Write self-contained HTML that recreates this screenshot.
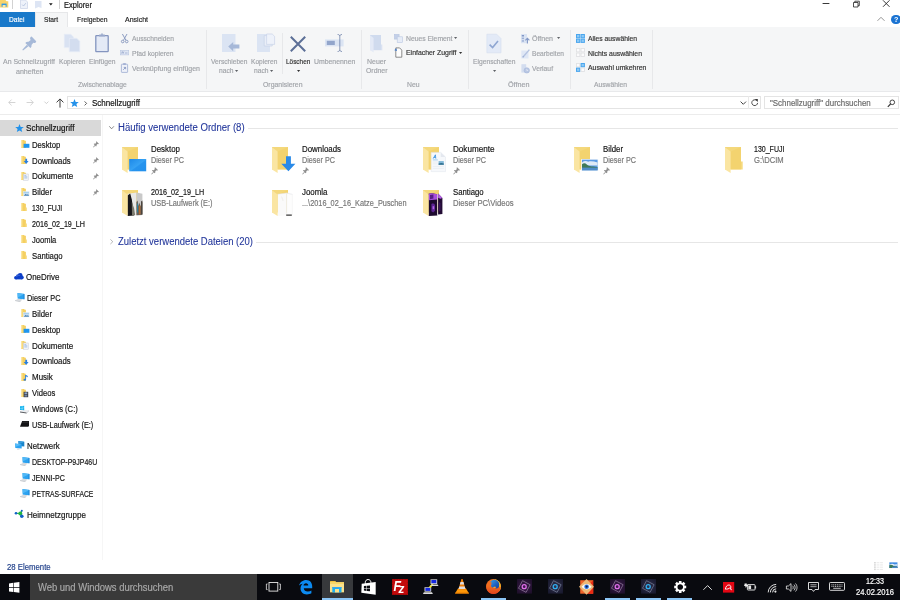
<!DOCTYPE html>
<html><head><meta charset="utf-8">
<style>
*{box-sizing:border-box;margin:0;padding:0}
html,body{width:900px;height:600px;overflow:hidden;background:#fff}
body{font-family:"Liberation Sans",sans-serif;font-size:8px;color:#1b1b1b;position:relative}
.a{position:absolute}
.t{position:absolute;white-space:pre;line-height:10px;height:10px;transform-origin:0 50%;-webkit-text-stroke:.18px currentColor}
.dis{color:#a1a4a9}
.blue{color:#1e3287}
.sub{color:#767676}
svg{position:absolute;overflow:visible}
</style></head><body><div id="w" style="position:absolute;left:0;top:0;width:900px;height:600px;will-change:transform">
<svg style="left:0px;top:0px" width="9" height="9" viewBox="0 0 9 9"><path d="M0 0h5.5l1 1.2H8.3V7.6H0z" fill="#f7d36b"/><rect x="1.6" y="3.6" width="5" height="3.2" fill="#2f9ae8"/><rect x="2.6" y="5" width="3" height="2.6" fill="#fbe7a3"/></svg>
<div class="a" style="left:11.5px;top:0px;width:1px;height:9px;background:#d2d2d2"></div>
<svg style="left:20px;top:0px" width="8" height="9" viewBox="0 0 8 9"><path d="M.5 0H5.5L7.5 2V8.5H.5z" fill="#eef2fa" stroke="#c9d3e6" stroke-width=".7"/><path d="M2.2 4.6l1.3 1.400 2.300-2.800" fill="none" stroke="#b6c4df" stroke-width=".9"/></svg>
<svg style="left:35px;top:1px" width="7" height="8" viewBox="0 0 7 8"><path d="M0 0h6.500v7L3.500 6 0 7.600z" fill="#dde5f4"/></svg>
<svg style="left:49.2px;top:3.4px" width="4" height="3" viewBox="0 0 4 3"><path d="M0 .2h3.700L1.850 2.600z" fill="#1a1a1a"/></svg>
<div class="a" style="left:59.3px;top:0px;width:1px;height:9px;background:#d2d2d2"></div>
<div class="t" style="left:64.00px;top:-0.20px;font-size:8.3px;transform:scaleX(0.9058);color:#111;">Explorer</div>
<svg style="left:822px;top:0px" width="78" height="10" viewBox="0 0 78 10"><path d="M.6 3.500h6.800" stroke="#222" stroke-width=".9" fill="none"/><path d="M31.500 2.500h4.500v4.500h-4.500zM32.800 2.500v-1.300h4.500v4.500h-1.300" stroke="#222" stroke-width=".8" fill="none"/><path d="M61 .3l6.500 6.500M67.500 .3L61 6.800" stroke="#222" stroke-width=".9" fill="none"/></svg>
<div class="a" style="left:0px;top:12px;width:35px;height:15px;background:#1979ca"></div>
<div class="a" style="left:35px;top:12px;width:33px;height:16px;background:#f5f6f7;border:1px solid #e6e7e9;border-bottom:none"></div>
<div class="t" style="left:8.50px;top:15.10px;font-size:7.6px;transform:scaleX(0.8734);color:#fff;">Datei</div>
<div class="t" style="left:44.00px;top:15.10px;font-size:7.6px;transform:scaleX(0.8720);color:#222;">Start</div>
<div class="t" style="left:76.50px;top:15.10px;font-size:7.6px;transform:scaleX(0.8912);color:#222;">Freigeben</div>
<div class="t" style="left:125.00px;top:15.10px;font-size:7.6px;transform:scaleX(0.9227);color:#222;">Ansicht</div>
<svg style="left:877px;top:16px" width="8" height="6" viewBox="0 0 8 6"><path d="M.5 4.800L4 1.300l3.500 3.500" stroke="#7a7a7a" stroke-width=".8" fill="none"/></svg>
<div class="a" style="left:891.4px;top:14.6px;width:9.400px;height:9.400px;border-radius:50%;background:#1a73d2;color:#fff;font-size:7.200px;line-height:9.600px;text-align:center;font-weight:bold">?</div>
<div class="a" style="left:0px;top:27px;width:900px;height:65px;background:#f5f6f7;border-bottom:1px solid #e8e9eb"></div>
<svg style="left:21px;top:36px" width="16" height="15" viewBox="0 0 16 15"><g fill="#a6b9d8"><path d="M10.600 .6L15.200 5.200C15.200 6.200 14.200 7.200 13.200 7.100L12.300 6.700 10.500 9C10.700 10.400 10.300 11.400 9.400 12.100L4.300 6.900C5 6 6.200 5.600 7.500 5.800L9.700 3.900 9.100 2.900C9 1.800 9.700.8 10.600.6Z"/><path d="M5.900 8.700L7.500 10.300 2 14.400 1.300 13.700Z"/></g></svg>
<svg style="left:64px;top:34px" width="17" height="19" viewBox="0 0 17 19"><path d="M.3.300h6.500l2.700 2.700v10.600H.3z" fill="#d9e2f2" stroke="#e6ecf7" stroke-width=".6"/><path d="M5.300 4.300h7.500l3 3v10.500H5.300z" fill="#d3ddef" stroke="#e8eef8" stroke-width=".7"/></svg>
<svg style="left:95px;top:33px" width="14" height="20" viewBox="0 0 14 20"><rect x=".8" y="2.600" width="12.400" height="16" rx=".6" fill="#e4eaf6" stroke="#8495bf" stroke-width="1.300"/><rect x="4" y="1.600" width="6" height="2" rx=".5" fill="#9aa9cc"/><rect x="6.300" y=".4" width="1.400" height="1.600" fill="#9aa9cc"/></svg>
<div class="t" style="left:3.00px;top:56.90px;font-size:7.5px;transform:scaleX(0.9262);color:#a1a4a9;">An Schnellzugriff</div>
<div class="t" style="left:15.55px;top:66.90px;font-size:7.5px;transform:scaleX(0.9419);color:#a1a4a9;">anheften</div>
<div class="t" style="left:58.75px;top:56.90px;font-size:7.5px;transform:scaleX(0.8826);color:#a1a4a9;">Kopieren</div>
<div class="t" style="left:88.75px;top:56.90px;font-size:7.5px;transform:scaleX(0.8949);color:#a1a4a9;">Einfügen</div>
<svg style="left:120.5px;top:33.5px" width="8" height="10" viewBox="0 0 8 10"><path d="M1.400 0L4.900 6.200M6 0L2.500 6.200" stroke="#8d9dc2" stroke-width="1" fill="none"/><circle cx="1.700" cy="7.500" r="1.300" fill="none" stroke="#8d9dc2" stroke-width="1"/><circle cx="5.700" cy="7.500" r="1.300" fill="none" stroke="#8d9dc2" stroke-width="1"/></svg>
<svg style="left:120px;top:50px" width="9" height="6" viewBox="0 0 9 6"><rect x=".3" y=".3" width="8.400" height="4.600" fill="#dfe6f4" stroke="#b9c6e0" stroke-width=".6"/><path d="M1.500 3.500l.8-2 .8 2 .8-2M5 3h2.500" stroke="#8c9cc2" stroke-width=".6" fill="none"/></svg>
<svg style="left:121px;top:63px" width="7" height="10" viewBox="0 0 7 10"><rect x=".4" y="1.200" width="6.200" height="8.200" rx=".5" fill="#eef1f9" stroke="#9dacd0" stroke-width=".8"/><rect x="2.200" y=".2" width="2.600" height="1.600" fill="#9dacd0"/><path d="M2.200 6.800L4.400 4.600M2.800 4.400h1.800v1.800" stroke="#6f82b3" stroke-width=".7" fill="none"/></svg>
<div class="t" style="left:132.00px;top:33.70px;font-size:7.5px;transform:scaleX(0.8913);color:#a1a4a9;">Ausschneiden</div>
<div class="t" style="left:132.00px;top:48.50px;font-size:7.5px;transform:scaleX(0.8967);color:#a1a4a9;">Pfad kopieren</div>
<div class="t" style="left:132.00px;top:63.50px;font-size:7.5px;transform:scaleX(0.9318);color:#a1a4a9;">Verknüpfung einfügen</div>
<div class="t" style="left:78.05px;top:80.00px;font-size:7.5px;transform:scaleX(0.8985);color:#a1a4a9;">Zwischenablage</div>
<div class="a" style="left:206px;top:30px;width:1px;height:59px;background:#e7e8ea"></div>
<svg style="left:222px;top:34px" width="19" height="19" viewBox="0 0 19 19"><path d="M0 0h13.500v18H0z" fill="#dbe4f3"/><path d="M6.200 12.600l5-4.600v2.600h6.200v4h-6.200v2.600z" fill="#a6b8d8"/></svg>
<svg style="left:257px;top:34px" width="19" height="19" viewBox="0 0 19 19"><path d="M0 0h13v18H0z" fill="#dbe4f3"/><path d="M7.200 1.600h5.600l2.400 2.400v8H7.200z" fill="#e9eef8" stroke="#c3cfe6" stroke-width=".6"/><path d="M9.600 0h5.600l2.400 2.400v8H9.600z" fill="#eef2fa" stroke="#c3cfe6" stroke-width=".6"/></svg>
<svg style="left:290px;top:35.5px" width="16" height="16" viewBox="0 0 16 16"><path d="M.8.800l14.400 14.400M15.200.8L.8 15.200" stroke="#5c6f97" stroke-width="2" fill="none"/></svg>
<svg style="left:325px;top:34px" width="20" height="18" viewBox="0 0 20 18"><rect x="0" y="5.400" width="18.600" height="7" fill="#dbe4f3"/><rect x="1.800" y="6.800" width="8" height="4.200" fill="#92a5cb"/><path d="M12.600.5c1.400 0 2.200.6 2.200 1.600v13.800c0 1-.8 1.600-2.200 1.600M17 .5c-1.400 0-2.200.6-2.200 1.600M17 17.500c-1.400 0-2.200-.6-2.200-1.600" stroke="#6c7fa8" stroke-width=".8" fill="none"/></svg>
<div class="t" style="left:210.55px;top:57.00px;font-size:7.5px;transform:scaleX(0.8842);color:#a1a4a9;">Verschieben</div>
<div class="t" style="left:218.70px;top:66.40px;font-size:7.5px;transform:scaleX(0.8915);color:#a1a4a9;">nach</div>
<svg style="left:235.2px;top:70.1px" width="4" height="3" viewBox="0 0 4 3"><path d="M0 0h3.200L1.600 2z" fill="#5f6267"/></svg>
<div class="t" style="left:250.75px;top:57.00px;font-size:7.5px;transform:scaleX(0.8760);color:#a1a4a9;">Kopieren</div>
<div class="t" style="left:253.70px;top:66.40px;font-size:7.5px;transform:scaleX(0.8915);color:#a1a4a9;">nach</div>
<svg style="left:270.3px;top:70.1px" width="4" height="3" viewBox="0 0 4 3"><path d="M0 0h3.200L1.600 2z" fill="#5f6267"/></svg>
<div class="a" style="left:282px;top:33px;width:1px;height:41px;background:#e7e8ea"></div>
<div class="t" style="left:285.75px;top:57.00px;font-size:7.5px;transform:scaleX(0.8569);color:#333;">Löschen</div>
<svg style="left:296.5px;top:70px" width="4" height="3" viewBox="0 0 4 3"><path d="M0 0h3.200L1.600 2z" fill="#333"/></svg>
<div class="t" style="left:313.75px;top:57.00px;font-size:7.5px;transform:scaleX(0.9171);color:#a1a4a9;">Umbenennen</div>
<div class="t" style="left:263.05px;top:80.00px;font-size:7.5px;transform:scaleX(0.9198);color:#a1a4a9;">Organisieren</div>
<div class="a" style="left:361px;top:30px;width:1px;height:59px;background:#e7e8ea"></div>
<svg style="left:370px;top:35px" width="13" height="18" viewBox="0 0 13 18"><path d="M0 0h11V15.200H0z" fill="#d0dbee"/><path d="M11 9.600h1.300v5.600H11z" fill="#d9e2f2"/><path d="M0 .2L3.600 3V17.600L0 15z" fill="#e4eaf6"/></svg>
<svg style="left:394px;top:34px" width="9" height="9" viewBox="0 0 9 9"><rect x=".3" y=".3" width="4.800" height="4.800" fill="#c3d0e8" stroke="#b3c2df" stroke-width=".5"/><rect x="3.200" y="2.800" width="5.200" height="5.800" fill="#e6ecf7" stroke="#b9c7e2" stroke-width=".6"/></svg>
<svg style="left:394px;top:47px" width="9" height="11" viewBox="0 0 9 11"><path d="M1.800.900h3.800l2.200 2.200v7.100H1.800z" fill="#fdfdfd" stroke="#5c5c5c" stroke-width=".7"/><path d="M.3 3.300L2.300 1.300l.7 2.600z" fill="#3f78c8"/></svg>
<div class="t" style="left:367.00px;top:57.00px;font-size:7.5px;transform:scaleX(0.9299);color:#a1a4a9;">Neuer</div>
<div class="t" style="left:365.95px;top:66.40px;font-size:7.5px;transform:scaleX(0.9210);color:#a1a4a9;">Ordner</div>
<div class="t" style="left:405.50px;top:33.70px;font-size:7.5px;transform:scaleX(0.9068);color:#a1a4a9;">Neues Element</div>
<svg style="left:454.2px;top:37.4px" width="4" height="3" viewBox="0 0 4 3"><path d="M0 0h3.200L1.600 2z" fill="#5f6267"/></svg>
<div class="t" style="left:405.50px;top:48.10px;font-size:7.5px;transform:scaleX(0.9200);color:#333;">Einfacher Zugriff</div>
<svg style="left:458.8px;top:51.8px" width="4" height="3" viewBox="0 0 4 3"><path d="M0 0h3.200L1.600 2z" fill="#333"/></svg>
<div class="t" style="left:407.45px;top:80.00px;font-size:7.5px;transform:scaleX(0.9082);color:#a1a4a9;">Neu</div>
<div class="a" style="left:468px;top:30px;width:1px;height:59px;background:#e7e8ea"></div>
<svg style="left:486px;top:34px" width="16" height="20" viewBox="0 0 16 20"><path d="M.9.200h9.800l4.300 4.300v14.300H.9z" fill="#e3eaf7" stroke="#d3ddef" stroke-width=".6"/><path d="M3.600 10.600l3 3 5.400-6.600" fill="none" stroke="#8fa6d2" stroke-width="1.600"/></svg>
<svg style="left:520.5px;top:34px" width="9" height="10" viewBox="0 0 9 10"><rect x="0" y="0" width="6" height="9.200" fill="#dbe4f3"/><rect x=".8" y="1" width="2.200" height="1.500" fill="#8398c6"/><rect x=".8" y="3.600" width="2.200" height="1.500" fill="#9fb1d6"/><rect x=".8" y="6.200" width="2.200" height="1.500" fill="#9fb1d6"/><path d="M6.400 9.400V4.400M4.400 6.400l2-2.200 2 2.200" stroke="#8398c6" stroke-width="1.100" fill="none"/></svg>
<svg style="left:520.5px;top:48.5px" width="9" height="10" viewBox="0 0 9 10"><path d="M.3 1.400h5.200l2 2v6H.3z" fill="#dfe7f5"/><path d="M1.800 8.200L8.400.6" stroke="#b3c2e0" stroke-width="1.400"/><path d="M1.400 8.600l.6-1.600 1 .9z" fill="#8ea3cf"/></svg>
<svg style="left:520.5px;top:63.5px" width="9" height="10" viewBox="0 0 9 10"><path d="M.4.200h4.800v8.400H.4z" fill="#d3ddef"/><circle cx="5.800" cy="6.400" r="2.700" fill="#b9c7e3" stroke="#9fb1d6" stroke-width=".5"/><path d="M5.800 4.900v1.600h1.300" stroke="#eef2fa" stroke-width=".6" fill="none"/></svg>
<div class="t" style="left:473.05px;top:57.00px;font-size:7.5px;transform:scaleX(0.8940);color:#a1a4a9;">Eigenschaften</div>
<svg style="left:492.6px;top:69.6px" width="4" height="3" viewBox="0 0 4 3"><path d="M0 0h3.200L1.600 2z" fill="#5f6267"/></svg>
<div class="t" style="left:532.00px;top:33.70px;font-size:7.5px;transform:scaleX(0.9382);color:#a1a4a9;">Öffnen</div>
<svg style="left:556.6px;top:37.4px" width="4" height="3" viewBox="0 0 4 3"><path d="M0 0h3.200L1.600 2z" fill="#5f6267"/></svg>
<div class="t" style="left:532.00px;top:48.50px;font-size:7.5px;transform:scaleX(0.8820);color:#a1a4a9;">Bearbeiten</div>
<div class="t" style="left:532.00px;top:63.80px;font-size:7.5px;transform:scaleX(0.8994);color:#a1a4a9;">Verlauf</div>
<div class="t" style="left:507.95px;top:80.00px;font-size:7.5px;transform:scaleX(0.9606);color:#a1a4a9;">Öffnen</div>
<div class="a" style="left:570px;top:30px;width:1px;height:59px;background:#e7e8ea"></div>
<svg style="left:576px;top:33.5px" width="9" height="9" viewBox="0 0 9 9"><rect x="0" y="0" width="4.300" height="4.300" fill="#4aa6ee"/><rect x="1" y="1" width="2.300" height="2.300" fill="#8ecaf6"/><rect x="4.6" y="0" width="4.300" height="4.300" fill="#4aa6ee"/><rect x="5.6" y="1" width="2.300" height="2.300" fill="#8ecaf6"/><rect x="0" y="4.6" width="4.300" height="4.300" fill="#4aa6ee"/><rect x="1" y="5.6" width="2.300" height="2.300" fill="#8ecaf6"/><rect x="4.6" y="4.6" width="4.300" height="4.300" fill="#4aa6ee"/><rect x="5.6" y="5.6" width="2.300" height="2.300" fill="#8ecaf6"/></svg>
<svg style="left:576px;top:48px" width="9" height="9" viewBox="0 0 9 9"><rect x="0" y="0" width="4.300" height="4.300" fill="#e1e2e4"/><rect x="0.9" y="0.9" width="2.500" height="2.500" fill="#fbfbfc"/><rect x="4.6" y="0" width="4.300" height="4.300" fill="#e1e2e4"/><rect x="5.5" y="0.9" width="2.500" height="2.500" fill="#fbfbfc"/><rect x="0" y="4.6" width="4.300" height="4.300" fill="#e1e2e4"/><rect x="0.9" y="5.5" width="2.500" height="2.500" fill="#fbfbfc"/><rect x="4.6" y="4.6" width="4.300" height="4.300" fill="#e1e2e4"/><rect x="5.5" y="5.5" width="2.500" height="2.500" fill="#fbfbfc"/></svg>
<svg style="left:576px;top:63px" width="9" height="9" viewBox="0 0 9 9"><rect x="0" y="0" width="4.300" height="4.300" fill="#e1e2e4"/><rect x="0.9" y="0.9" width="2.500" height="2.500" fill="#fbfbfc"/><rect x="4.6" y="0" width="4.300" height="4.300" fill="#4aa6ee"/><rect x="5.6" y="1" width="2.300" height="2.300" fill="#8ecaf6"/><rect x="0" y="4.6" width="4.300" height="4.300" fill="#4aa6ee"/><rect x="1" y="5.6" width="2.300" height="2.300" fill="#8ecaf6"/><rect x="4.6" y="4.6" width="4.300" height="4.300" fill="#e1e2e4"/><rect x="5.5" y="5.5" width="2.500" height="2.500" fill="#fbfbfc"/></svg>
<div class="t" style="left:587.70px;top:34.00px;font-size:7.5px;transform:scaleX(0.9041);color:#333;">Alles auswählen</div>
<div class="t" style="left:587.70px;top:48.50px;font-size:7.5px;transform:scaleX(0.9187);color:#333;">Nichts auswählen</div>
<div class="t" style="left:587.70px;top:63.00px;font-size:7.5px;transform:scaleX(0.9140);color:#333;">Auswahl umkehren</div>
<div class="t" style="left:594.00px;top:79.80px;font-size:7.5px;transform:scaleX(0.8994);color:#a1a4a9;">Auswählen</div>
<div class="a" style="left:652px;top:30px;width:1px;height:59px;background:#e7e8ea"></div>
<div class="a" style="left:0px;top:114px;width:900px;height:1px;background:#ececec"></div>
<svg style="left:7.5px;top:99px" width="8" height="7" viewBox="0 0 8 7"><path d="M7.400 3.500H.8M3.600.6L.7 3.500l2.900 2.900" stroke="#cfcfcf" stroke-width=".9" fill="none"/></svg>
<svg style="left:26px;top:99px" width="8" height="7" viewBox="0 0 8 7"><path d="M.6 3.500h6.600M4.400.6l2.900 2.900-2.900 2.900" stroke="#cfcfcf" stroke-width=".9" fill="none"/></svg>
<svg style="left:44px;top:101px" width="5" height="4" viewBox="0 0 5 4"><path d="M.4.600l2 2 2-2" stroke="#c4c4c4" stroke-width=".8" fill="none"/></svg>
<svg style="left:55.5px;top:98px" width="8" height="10" viewBox="0 0 8 10"><path d="M4 9.600V1M.6 4.400L4 .9l3.400 3.500" stroke="#3c3c3c" stroke-width="1" fill="none"/></svg>
<div class="a" style="left:67px;top:96px;width:694px;height:13px;border:1px solid #e4e4e4"></div>
<svg style="left:70.2px;top:98.5px" width="9" height="8" viewBox="0 0 9 8"><path d="M4.500 0l1.200 2.900 3.100.2-2.400 2 .8 3-2.700-1.700L1.800 8.100l.8-3-2.400-2 3.100-.2z" fill="#2492ea"/></svg>
<svg style="left:84px;top:100.5px" width="4" height="5" viewBox="0 0 4 5"><path d="M.6.400l2 2-2 2" stroke="#333" stroke-width=".8" fill="none"/></svg>
<svg style="left:739.5px;top:101px" width="7" height="5" viewBox="0 0 7 5"><path d="M.6.600l2.700 2.700L6 .6" stroke="#444" stroke-width="1" fill="none"/></svg>
<div class="a" style="left:748px;top:96px;width:1px;height:13px;background:#e9e9e9"></div>
<svg style="left:751.3px;top:99.2px" width="8" height="8" viewBox="0 0 8 8"><path d="M5.600 1.500A2.900 2.900 0 1 0 6.600 3.900" stroke="#3a3a3a" stroke-width=".9" fill="none"/><path d="M3.700 0h3.100v3.100z" fill="#3a3a3a"/></svg>
<div class="a" style="left:764px;top:96px;width:135px;height:13px;border:1px solid #e4e4e4"></div>
<svg style="left:886.5px;top:98.5px" width="9" height="9" viewBox="0 0 9 9"><circle cx="5.300" cy="3.300" r="2.300" stroke="#333" stroke-width=".9" fill="none"/><path d="M3.600 5L.8 7.800" stroke="#333" stroke-width="1.100"/></svg>
<div class="t" style="left:91.70px;top:97.70px;font-size:8.6px;transform:scaleX(0.9325);color:#111;">Schnellzugriff</div>
<div class="t" style="left:769.60px;top:98.20px;font-size:8.6px;transform:scaleX(0.9230);color:#6a6a6a;">&quot;Schnellzugriff&quot; durchsuchen</div>
<div class="a" style="left:0px;top:120px;width:101px;height:16px;background:#d9d9d9"></div>
<div class="a" style="left:102px;top:115px;width:1px;height:445px;background:#f6f6f6"></div>
<svg style="left:15.4px;top:124.3px" width="9" height="8" viewBox="0 0 9 8"><path d="M4.500 0l1.200 2.900 3.100.2-2.400 2 .8 3-2.700-1.700L1.800 8.100l.8-3-2.400-2 3.100-.2z" fill="#2492ea"/></svg>
<div class="t" style="left:26.10px;top:123.40px;font-size:8.5px;transform:scaleX(0.9514);color:#111;">Schnellzugriff</div>
<svg style="left:21.1px;top:139.89999999999998px" width="9" height="9" viewBox="0 0 9 9"><path d="M0 .1h3.100l.6.700h1.200v7.100H0z" fill="#f5d062"/><path d="M0 .1h1.400v8.200L0 7.500z" fill="#fbe6a0"/><rect x="2.600" y="3.800" width="5.800" height="4" fill="#1e96f0"/></svg>
<div class="t" style="left:31.70px;top:139.70px;font-size:8.5px;transform:scaleX(0.9075);color:#151515;">Desktop</div>
<svg style="left:93px;top:141.0px" width="6" height="7" viewBox="0 0 6 7"><g fill="#8e8e8e"><path d="M3.400.2L5.900 2.700 5.200 3.200 4.400 2.900 3.500 4.100 3.600 5.100 3 5.500.7 3.100 1.200 2.600 2.200 2.800 3.300 1.700 2.900.9z"/><path d="M.1 6.100L1.900 4.100 2.400 4.600.5 6.500z"/></g></svg>
<svg style="left:21.1px;top:155.7px" width="9" height="9" viewBox="0 0 9 9"><path d="M0 .1h3.100l.6.700h1.200v7.100H0z" fill="#f5d062"/><path d="M0 .1h1.400v8.200L0 7.500z" fill="#fbe6a0"/><path d="M4.300 2.800h1.800v2.200h1.500L5.200 7.900 2.800 5h1.500z" fill="#2a7fe0"/></svg>
<div class="t" style="left:31.70px;top:155.50px;font-size:8.5px;transform:scaleX(0.9202);color:#151515;">Downloads</div>
<svg style="left:93px;top:156.8px" width="6" height="7" viewBox="0 0 6 7"><g fill="#8e8e8e"><path d="M3.400.2L5.900 2.700 5.200 3.200 4.400 2.900 3.500 4.100 3.600 5.100 3 5.500.7 3.100 1.200 2.600 2.200 2.800 3.300 1.700 2.900.9z"/><path d="M.1 6.100L1.900 4.100 2.400 4.600.5 6.500z"/></g></svg>
<svg style="left:21.1px;top:171.7px" width="9" height="9" viewBox="0 0 9 9"><path d="M0 .1h3.100l.6.700h1.200v7.100H0z" fill="#f5d062"/><path d="M0 .1h1.400v8.200L0 7.500z" fill="#fbe6a0"/><rect x="2.400" y="2" width="4.800" height="6.200" fill="#f4f6fa" stroke="#c2c8d4" stroke-width=".5"/><path d="M3.300 3.600h2M3.300 4.800h3M3.300 6h3" stroke="#7fa6d8" stroke-width=".6"/></svg>
<div class="t" style="left:31.70px;top:171.40px;font-size:8.5px;transform:scaleX(0.9501);color:#151515;">Dokumente</div>
<svg style="left:93px;top:172.8px" width="6" height="7" viewBox="0 0 6 7"><g fill="#8e8e8e"><path d="M3.400.2L5.900 2.700 5.200 3.200 4.400 2.900 3.500 4.100 3.600 5.100 3 5.500.7 3.100 1.200 2.600 2.200 2.800 3.300 1.700 2.900.9z"/><path d="M.1 6.100L1.900 4.100 2.400 4.600.5 6.500z"/></g></svg>
<svg style="left:21.1px;top:187.5px" width="9" height="9" viewBox="0 0 9 9"><path d="M0 .1h3.100l.6.700h1.200v7.100H0z" fill="#f5d062"/><path d="M0 .1h1.400v8.200L0 7.500z" fill="#fbe6a0"/><rect x="2.400" y="3.600" width="5.800" height="4.400" fill="#dceaf6" stroke="#e8eef4" stroke-width=".4"/><path d="M2.600 7.800l2-2 1.400 1 1-.8 1.200 1.800z" fill="#4f86b8"/><rect x="2.600" y="3.800" width="5.400" height="1.600" fill="#a8d0ee"/></svg>
<div class="t" style="left:31.70px;top:187.30px;font-size:8.5px;transform:scaleX(0.9202);color:#151515;">Bilder</div>
<svg style="left:93px;top:188.60000000000002px" width="6" height="7" viewBox="0 0 6 7"><g fill="#8e8e8e"><path d="M3.400.2L5.900 2.700 5.200 3.200 4.400 2.900 3.500 4.100 3.600 5.100 3 5.500.7 3.100 1.200 2.600 2.200 2.800 3.300 1.700 2.900.9z"/><path d="M.1 6.100L1.900 4.100 2.400 4.600.5 6.500z"/></g></svg>
<svg style="left:21.1px;top:203.29999999999998px" width="9" height="9" viewBox="0 0 9 9"><path d="M0 .1h3.100l.6.700h1.200v7.100H0z" fill="#f5d062"/><path d="M0 .1h1.400v8.200L0 7.500z" fill="#fbe6a0"/><path d="M4.900 4.400h.9v3.500h-.9z" fill="#f7d978"/></svg>
<div class="t" style="left:31.70px;top:203.10px;font-size:8.5px;transform:scaleX(0.8167);color:#151515;">130_FUJI</div>
<svg style="left:21.1px;top:219.2px" width="9" height="9" viewBox="0 0 9 9"><path d="M0 .1h3.100l.6.700h1.200v7.100H0z" fill="#f5d062"/><path d="M0 .1h1.400v8.200L0 7.500z" fill="#fbe6a0"/><path d="M4.900 4.400h.9v3.500h-.9z" fill="#f7d978"/></svg>
<div class="t" style="left:31.70px;top:218.90px;font-size:8.5px;transform:scaleX(0.8431);color:#151515;">2016_02_19_LH</div>
<svg style="left:21.1px;top:235.0px" width="9" height="9" viewBox="0 0 9 9"><path d="M0 .1h3.100l.6.700h1.200v7.100H0z" fill="#f5d062"/><path d="M0 .1h1.400v8.200L0 7.500z" fill="#fbe6a0"/><path d="M4.900 4.400h.9v3.500h-.9z" fill="#f7d978"/></svg>
<div class="t" style="left:31.70px;top:234.70px;font-size:8.5px;transform:scaleX(0.8867);color:#151515;">Joomla</div>
<svg style="left:21.1px;top:250.89999999999998px" width="9" height="9" viewBox="0 0 9 9"><path d="M0 .1h3.100l.6.700h1.200v7.100H0z" fill="#f5d062"/><path d="M0 .1h1.400v8.200L0 7.500z" fill="#fbe6a0"/><path d="M4.900 4.400h.9v3.500h-.9z" fill="#f7d978"/></svg>
<div class="t" style="left:31.70px;top:250.60px;font-size:8.5px;transform:scaleX(0.9088);color:#151515;">Santiago</div>
<svg style="left:14.3px;top:272.7px" width="10" height="7" viewBox="0 0 10 7"><g fill="#0c3ec8"><circle cx="1.800" cy="4.700" r="1.700"/><circle cx="4" cy="3.200" r="2"/><circle cx="6.200" cy="2.500" r="2.400"/><circle cx="8" cy="4.600" r="1.800"/><rect x="1.800" y="3.600" width="6.200" height="2.800"/></g><path d="M2.400 4c.6-1.400 2-2 3.400-1.400" stroke="#6a8ee8" stroke-width=".5" fill="none"/></svg>
<div class="t" style="left:26.10px;top:271.90px;font-size:8.5px;transform:scaleX(0.9302);color:#151515;">OneDrive</div>
<svg style="left:14.7px;top:293.09999999999997px" width="10" height="9" viewBox="0 0 10 9"><path d="M2.500 0L9.400.9V6.200L2.700 5.800z" fill="#2ba2f0"/><path d="M2.500 0L9.400.9 2.700 4.600z" fill="#52b8f6"/><path d="M8.600.8l.8.100V6.200l-.8-.050z" fill="#1a7fd0"/><path d="M0 7.400L3.200 5.800 7.800 6.200 5.500 8.200z" fill="#d6dade"/><path d="M0 7.400L5.500 8.200v.6L0 7.900z" fill="#a4aab2"/></svg>
<div class="t" style="left:26.50px;top:293.20px;font-size:8.5px;transform:scaleX(0.8649);color:#151515;">Dieser PC</div>
<svg style="left:21.1px;top:309.09999999999997px" width="9" height="9" viewBox="0 0 9 9"><path d="M0 .1h3.100l.6.700h1.200v7.100H0z" fill="#f5d062"/><path d="M0 .1h1.400v8.200L0 7.500z" fill="#fbe6a0"/><rect x="2.400" y="3.600" width="5.800" height="4.400" fill="#dceaf6" stroke="#e8eef4" stroke-width=".4"/><path d="M2.600 7.800l2-2 1.400 1 1-.8 1.200 1.800z" fill="#4f86b8"/><rect x="2.600" y="3.800" width="5.400" height="1.600" fill="#a8d0ee"/></svg>
<div class="t" style="left:31.70px;top:308.90px;font-size:8.5px;transform:scaleX(0.9202);color:#151515;">Bilder</div>
<svg style="left:21.1px;top:325.0px" width="9" height="9" viewBox="0 0 9 9"><path d="M0 .1h3.100l.6.700h1.200v7.100H0z" fill="#f5d062"/><path d="M0 .1h1.400v8.200L0 7.500z" fill="#fbe6a0"/><rect x="2.600" y="3.800" width="5.800" height="4" fill="#1e96f0"/></svg>
<div class="t" style="left:31.70px;top:324.80px;font-size:8.5px;transform:scaleX(0.9075);color:#151515;">Desktop</div>
<svg style="left:21.1px;top:340.9px" width="9" height="9" viewBox="0 0 9 9"><path d="M0 .1h3.100l.6.700h1.200v7.100H0z" fill="#f5d062"/><path d="M0 .1h1.400v8.200L0 7.500z" fill="#fbe6a0"/><rect x="2.400" y="2" width="4.800" height="6.200" fill="#f4f6fa" stroke="#c2c8d4" stroke-width=".5"/><path d="M3.300 3.600h2M3.300 4.800h3M3.300 6h3" stroke="#7fa6d8" stroke-width=".6"/></svg>
<div class="t" style="left:31.70px;top:340.60px;font-size:8.5px;transform:scaleX(0.9501);color:#151515;">Dokumente</div>
<svg style="left:21.1px;top:356.7px" width="9" height="9" viewBox="0 0 9 9"><path d="M0 .1h3.100l.6.700h1.200v7.100H0z" fill="#f5d062"/><path d="M0 .1h1.400v8.200L0 7.500z" fill="#fbe6a0"/><path d="M4.300 2.800h1.800v2.200h1.500L5.200 7.900 2.800 5h1.500z" fill="#2a7fe0"/></svg>
<div class="t" style="left:31.70px;top:356.40px;font-size:8.5px;transform:scaleX(0.9202);color:#151515;">Downloads</div>
<svg style="left:21.1px;top:372.59999999999997px" width="9" height="9" viewBox="0 0 9 9"><path d="M0 .1h3.100l.6.700h1.200v7.100H0z" fill="#f5d062"/><path d="M0 .1h1.400v8.200L0 7.500z" fill="#fbe6a0"/><path d="M4.600 2v4.600" stroke="#2a7fe0" stroke-width=".9"/><ellipse cx="3.800" cy="6.800" rx="1.300" ry="1" fill="#2a7fe0"/><path d="M4.600 2c1.600.2 2.400 1 2.400 2.400-.6-.8-1.400-1-2.400-1z" fill="#2a7fe0"/></svg>
<div class="t" style="left:31.70px;top:372.30px;font-size:8.5px;transform:scaleX(0.9370);color:#151515;">Musik</div>
<svg style="left:21.1px;top:388.5px" width="9" height="9" viewBox="0 0 9 9"><path d="M0 .1h3.100l.6.700h1.200v7.100H0z" fill="#f5d062"/><path d="M0 .1h1.400v8.200L0 7.500z" fill="#fbe6a0"/><rect x="2.600" y="2.800" width="4.600" height="5.400" fill="#3a3a40"/><rect x="3.500" y="3.400" width="2.800" height="1.800" fill="#8aa4c8"/><rect x="3.500" y="5.800" width="2.800" height="1.800" fill="#6f86a8"/></svg>
<div class="t" style="left:31.70px;top:388.20px;font-size:8.5px;transform:scaleX(0.9017);color:#151515;">Videos</div>
<svg style="left:19.9px;top:406.1px" width="9" height="8" viewBox="0 0 9 8"><path d="M0 5.600L2.400 3.400 9 4.200 6.600 6.600z" fill="#eceef1"/><path d="M0 5.600L6.600 6.600v1L0 6.600z" fill="#5a5d62"/><path d="M6.600 6.600L9 4.200v.9L6.600 7.600z" fill="#c4c8ce"/><path d="M0 .3L1.900 0v1.900L0 2zM2.200 0L4.200-.3v2.100l-2 .1zM0 2.300l1.900-.1v1.900L0 3.900zM2.200 2.200l2-.1v2.200l-2-.2z" fill="#12b4f0"/></svg>
<div class="t" style="left:31.70px;top:404.30px;font-size:8.5px;transform:scaleX(0.8979);color:#151515;">Windows (C:)</div>
<svg style="left:19.9px;top:421px" width="9" height="7" viewBox="0 0 9 7"><path d="M2.100 0h6.900v5L8.200 5.700H0z" fill="#141416"/><path d="M2.600.7h5.800v.7H2.300z" fill="#3a3a3e"/></svg>
<div class="t" style="left:31.70px;top:420.20px;font-size:8.5px;transform:scaleX(0.8651);color:#151515;">USB-Laufwerk (E:)</div>
<svg style="left:14.8px;top:441px" width="10" height="9" viewBox="0 0 10 9"><path d="M3.400 0L9.300.8V5.600L3.600 5z" fill="#1a84c8"/><path d="M3.400 0L9.300.8 3.600 3.600z" fill="#3a9ede"/><path d="M0 2.600L6.700 3.500V7.600L.3 7z" fill="#2aa2f2"/><path d="M0 2.600L6.700 3.500.3 6z" fill="#56bbf8"/><path d="M2.600 7.600l2.400.2-.8.800-2.400-.2z" fill="#c8ccd2"/></svg>
<div class="t" style="left:26.50px;top:441.00px;font-size:8.5px;transform:scaleX(0.9230);color:#151515;">Netzwerk</div>
<svg style="left:19.7px;top:457.2px" width="10" height="9" viewBox="0 0 10 9"><path d="M2.500 0L9.400.9V6.200L2.700 5.800z" fill="#2ba2f0"/><path d="M2.500 0L9.400.9 2.700 4.600z" fill="#52b8f6"/><path d="M8.600.8l.8.100V6.200l-.8-.050z" fill="#1a7fd0"/><path d="M0 7.400L3.200 5.800 7.800 6.200 5.500 8.200z" fill="#d6dade"/><path d="M0 7.400L5.500 8.200v.6L0 7.900z" fill="#a4aab2"/></svg>
<div class="t" style="left:31.70px;top:457.00px;font-size:8.5px;transform:scaleX(0.8244);color:#151515;">DESKTOP-P9JP46U</div>
<svg style="left:19.7px;top:473.4px" width="10" height="9" viewBox="0 0 10 9"><path d="M2.500 0L9.400.9V6.200L2.700 5.800z" fill="#2ba2f0"/><path d="M2.500 0L9.400.9 2.700 4.600z" fill="#52b8f6"/><path d="M8.600.8l.8.100V6.200l-.8-.050z" fill="#1a7fd0"/><path d="M0 7.400L3.200 5.800 7.800 6.200 5.500 8.200z" fill="#d6dade"/><path d="M0 7.400L5.500 8.200v.6L0 7.900z" fill="#a4aab2"/></svg>
<div class="t" style="left:31.70px;top:473.20px;font-size:8.5px;transform:scaleX(0.8367);color:#151515;">JENNI-PC</div>
<svg style="left:19.7px;top:489.09999999999997px" width="10" height="9" viewBox="0 0 10 9"><path d="M2.500 0L9.400.9V6.200L2.700 5.800z" fill="#2ba2f0"/><path d="M2.500 0L9.400.9 2.700 4.600z" fill="#52b8f6"/><path d="M8.600.8l.8.100V6.200l-.8-.050z" fill="#1a7fd0"/><path d="M0 7.400L3.200 5.800 7.800 6.200 5.500 8.200z" fill="#d6dade"/><path d="M0 7.400L5.500 8.200v.6L0 7.900z" fill="#a4aab2"/></svg>
<div class="t" style="left:31.70px;top:488.90px;font-size:8.5px;transform:scaleX(0.7962);color:#151515;">PETRAS-SURFACE</div>
<svg style="left:15px;top:510px" width="9" height="9" viewBox="0 0 9 9"><path d="M1 3.300l4.300.2M5.300 3.500L6.800.8M5.300 3.500l1.500 2.800" stroke="#30b848" stroke-width="1.200"/><circle cx="5.300" cy="3.500" r="2" fill="#22b840"/><circle cx="1" cy="3.300" r="1.300" fill="#1262c8"/><circle cx="6.800" cy=".8" r="1" fill="#1262c8"/><circle cx="6.800" cy="6.300" r="1.800" fill="#1262c8"/></svg>
<div class="t" style="left:26.50px;top:509.70px;font-size:8.5px;transform:scaleX(0.9460);color:#151515;">Heimnetzgruppe</div>
<svg style="left:108.8px;top:125.7px" width="6" height="4" viewBox="0 0 6 4"><path d="M.3.300l2.300 2.500L4.900.3" stroke="#6a6a6a" stroke-width=".8" fill="none"/></svg>
<div class="t" style="left:117.90px;top:123.20px;font-size:10px;transform:scaleX(0.9570);color:#21359a;-webkit-text-stroke:.08px currentColor;">Häufig verwendete Ordner (8)</div>
<div class="a" style="left:247.5px;top:128px;width:650.5px;height:1px;background:#e6e6e6"></div>
<svg style="left:110.4px;top:239.3px" width="4" height="6" viewBox="0 0 4 6"><path d="M.4.400l2.400 2.300L.4 5" stroke="#9a9a9a" stroke-width=".7" fill="none"/></svg>
<div class="t" style="left:117.90px;top:237.40px;font-size:10px;transform:scaleX(0.9487);color:#21359a;-webkit-text-stroke:.08px currentColor;">Zuletzt verwendete Dateien (20)</div>
<div class="a" style="left:256px;top:242px;width:642px;height:1px;background:#e6e6e6"></div>
<svg style="left:121.7px;top:147.1px" width="27" height="27" viewBox="0 0 27 27"><path d="M0 0h16V22.500H0z" fill="#f4d87c"/><path d="M5.600 4.400L16 0v22.500H5.600z" fill="#f2d168" opacity=".6"/><defs><linearGradient id="gd" x1="0" y1="0" x2="1" y2="1"><stop offset="0" stop-color="#1c88e8"/><stop offset=".5" stop-color="#36a2f4"/><stop offset=".56" stop-color="#2794ee"/><stop offset="1" stop-color="#2290ec"/></linearGradient></defs><rect x="7.200" y="12" width="17" height="12.300" fill="url(#gd)"/><path d="M0 .2L5.600 4.400V26.100L0 22.400z" fill="#fae5a2"/></svg>
<div class="t" style="left:151.20px;top:144.00px;font-size:8.5px;transform:scaleX(0.9300);color:#151515;">Desktop</div>
<div class="t" style="left:151.20px;top:154.80px;font-size:8.5px;transform:scaleX(0.8519);color:#777;">Dieser PC</div>
<svg style="left:150.89999999999998px;top:167.1px" width="7.2" height="7.6" viewBox="0 0 6 6.6"><g fill="#8e8e8e"><path d="M3.400.2L5.900 2.700 5.200 3.200 4.400 2.900 3.500 4.100 3.600 5.100 3 5.500.7 3.100 1.200 2.600 2.200 2.800 3.300 1.700 2.900.9z"/><path d="M.1 6.100L1.900 4.100 2.400 4.600.5 6.500z"/></g></svg>
<svg style="left:272.2px;top:147.1px" width="27" height="27" viewBox="0 0 27 27"><path d="M0 0h16V22.500H0z" fill="#f4d87c"/><path d="M5.600 4.400L16 0v22.500H5.600z" fill="#f2d168" opacity=".6"/><path d="M14 9.300h4.900v7.500h4.500L16.400 24.300 9.300 16.800H14z" fill="#2a8ae8"/><path d="M0 .2L5.600 4.400V26.100L0 22.400z" fill="#fae5a2"/></svg>
<div class="t" style="left:301.80px;top:144.00px;font-size:8.5px;transform:scaleX(0.9274);color:#151515;">Downloads</div>
<div class="t" style="left:301.80px;top:154.80px;font-size:8.5px;transform:scaleX(0.8519);color:#777;">Dieser PC</div>
<svg style="left:301.5px;top:167.1px" width="7.2" height="7.6" viewBox="0 0 6 6.6"><g fill="#8e8e8e"><path d="M3.400.2L5.900 2.700 5.200 3.200 4.400 2.900 3.500 4.100 3.600 5.100 3 5.500.7 3.100 1.200 2.600 2.200 2.800 3.300 1.700 2.900.9z"/><path d="M.1 6.100L1.900 4.100 2.400 4.600.5 6.500z"/></g></svg>
<svg style="left:423.3px;top:147.1px" width="27" height="27" viewBox="0 0 27 27"><path d="M0 0h16V22.500H0z" fill="#f4d87c"/><path d="M5.600 4.400L16 0v22.500H5.600z" fill="#f2d168" opacity=".6"/><path d="M8.200 5.400h9.600l4.700 4.600V24.600H8.200z" fill="#f6f8fb" stroke="#e1e5ec" stroke-width=".5"/><path d="M17.800 5.400v4.600h4.700z" fill="#e4e8ef"/><path d="M10.200 11.600l2.200-3.800.4 3.800M10.800 10.400h1.800" stroke="#2f8be0" stroke-width=".8" fill="none"/><path d="M9.800 12.900h5" stroke="#6db4ea" stroke-width=".6"/><rect x="15.600" y="14.100" width="5.200" height="3.700" fill="#7fb6d6"/><path d="M15.600 16.600c1.800-.8 3.400-.8 5.200 0v1.200h-5.200z" fill="#2f6f8e"/><path d="M9.800 15h4.800M9.800 16.800h4.800M9.800 19.400h11M9.800 21.400h11" stroke="#e3e7ee" stroke-width=".6"/><path d="M0 .2L5.600 4.400V26.100L0 22.400z" fill="#fae5a2"/></svg>
<div class="t" style="left:452.80px;top:144.00px;font-size:8.5px;transform:scaleX(0.9547);color:#151515;">Dokumente</div>
<div class="t" style="left:452.80px;top:154.80px;font-size:8.5px;transform:scaleX(0.8519);color:#777;">Dieser PC</div>
<svg style="left:452.5px;top:167.1px" width="7.2" height="7.6" viewBox="0 0 6 6.6"><g fill="#8e8e8e"><path d="M3.400.2L5.900 2.700 5.200 3.200 4.400 2.900 3.500 4.100 3.600 5.100 3 5.500.7 3.100 1.200 2.600 2.200 2.800 3.300 1.700 2.900.9z"/><path d="M.1 6.100L1.900 4.100 2.400 4.600.5 6.500z"/></g></svg>
<svg style="left:574.1px;top:147.1px" width="27" height="27" viewBox="0 0 27 27"><path d="M0 0h16V22.500H0z" fill="#f4d87c"/><path d="M5.600 4.400L16 0v22.500H5.600z" fill="#f2d168" opacity=".6"/><rect x="7.200" y="12" width="17.100" height="12" fill="#f4f7fa"/><rect x="8" y="12.700" width="15.600" height="10.600" fill="#5a9ae4"/><path d="M8 15.400c2-1.600 4.400-1.800 6.200-.6 2.200-.8 5.600-.4 9.400.6v3H8z" fill="#dfeaf6"/><path d="M8 17.200c1.600-1.400 3.400-1.200 4.800.2 1.600 1.400 4 1.800 6.400 2.200l4.400.6v1H8z" fill="#3f7a58"/><path d="M8 20.600h15.600v2.700H8z" fill="#4f8cc8"/><path d="M0 .2L5.600 4.400V26.100L0 22.400z" fill="#fae5a2"/></svg>
<div class="t" style="left:603.40px;top:144.00px;font-size:8.5px;transform:scaleX(0.9202);color:#151515;">Bilder</div>
<div class="t" style="left:603.40px;top:154.80px;font-size:8.5px;transform:scaleX(0.8519);color:#777;">Dieser PC</div>
<svg style="left:603.1px;top:167.1px" width="7.2" height="7.6" viewBox="0 0 6 6.6"><g fill="#8e8e8e"><path d="M3.400.2L5.900 2.700 5.200 3.200 4.400 2.900 3.500 4.100 3.600 5.100 3 5.500.7 3.100 1.200 2.600 2.200 2.800 3.300 1.700 2.900.9z"/><path d="M.1 6.100L1.900 4.100 2.400 4.600.5 6.500z"/></g></svg>
<svg style="left:724.8px;top:147.1px" width="27" height="27" viewBox="0 0 27 27"><path d="M0 0h16V22.500H0z" fill="#f4d87c"/><path d="M5.600 4.400L16 0v22.500H5.600z" fill="#f2d168" opacity=".6"/><path d="M16 14.400h1.700v8.100H16z" fill="#f6da7e"/><path d="M0 .2L5.600 4.400V26.100L0 22.400z" fill="#fae5a2"/></svg>
<div class="t" style="left:754.30px;top:144.00px;font-size:8.5px;transform:scaleX(0.8248);color:#151515;">130_FUJI</div>
<div class="t" style="left:754.30px;top:154.80px;font-size:8.5px;transform:scaleX(0.8954);color:#777;">G:\DCIM</div>
<svg style="left:121.7px;top:189.7px" width="27" height="27" viewBox="0 0 27 27"><path d="M0 0h16V22.500H0z" fill="#f4d87c"/><path d="M5.600 4.400L16 0v22.500H5.600z" fill="#f2d168" opacity=".6"/><path d="M5.600 3.800L14.400 2.600V25L5.600 26.100z" fill="#e9e9e7"/><path d="M5.600 5.400l2.600-1.800 1.600 6 1.400 9.600.8 6.300-6.400.6z" fill="#18171a"/><path d="M9.800 12l2.200 6 1.200 7.200-3.200.4z" fill="#7c7a6e"/><path d="M14.400 2.600l6 1.200V25l-6 .2z" fill="#c9c9c9"/><path d="M14.400 12l1.200-1.600 1 5.600.8-3.600 1.200 4 1.800-5V25l-6 .2z" fill="#6a625a"/><path d="M15 13.600l1 .2v8.600l-1 .2z" fill="#2f7f9a"/><path d="M17 16l1.400-.4v8.600l-1.400.2z" fill="#b86a28"/><path d="M19 11.600l1.400-1V24l-1.400.2z" fill="#4a443e"/><path d="M0 .2L5.600 4.400V26.100L0 22.400z" fill="#fae5a2"/></svg>
<div class="t" style="left:151.20px;top:187.10px;font-size:8.5px;transform:scaleX(0.8462);color:#151515;">2016_02_19_LH</div>
<div class="t" style="left:151.20px;top:197.90px;font-size:8.5px;transform:scaleX(0.8680);color:#777;">USB-Laufwerk (E:)</div>
<svg style="left:272.2px;top:189.7px" width="27" height="27" viewBox="0 0 27 27"><path d="M0 0h16V22.500H0z" fill="#f4d87c"/><path d="M5.600 4.400L16 0v22.500H5.600z" fill="#f2d168" opacity=".6"/><path d="M5.600 4.200l9-1.200V25.200L5.600 26.100z" fill="#fafafa"/><path d="M14.600 3l5.800 1.400V25l-5.800.2z" fill="#fdfdfd" stroke="#ececec" stroke-width=".3"/><path d="M5.600 4.200l9-1.200 5.800 1.400" stroke="#e2e4ea" stroke-width=".5" fill="none"/><path d="M14.600 3v22.200" stroke="#e9e9e9" stroke-width=".4"/><path d="M9.600 6.600l1.200 3.200.2 1.200" stroke="#ecebe6" stroke-width=".8" fill="none"/><path d="M14.200 24.400h5.600v1.300h-5.600z" fill="#3a3a3a"/><path d="M0 .2L5.600 4.400V26.100L0 22.400z" fill="#fae5a2"/></svg>
<div class="t" style="left:301.80px;top:187.10px;font-size:8.5px;transform:scaleX(0.9305);color:#151515;">Joomla</div>
<div class="t" style="left:301.80px;top:197.90px;font-size:8.5px;transform:scaleX(0.8637);color:#777;">...\2016_02_16_Katze_Puschen</div>
<svg style="left:423.3px;top:189.7px" width="27" height="27" viewBox="0 0 27 27"><path d="M0 0h16V22.500H0z" fill="#f4d87c"/><path d="M5.600 4.400L16 0v22.500H5.600z" fill="#f2d168" opacity=".6"/><path d="M5.600 3.800l3.400-.6 5.400 1V25.600l-8.800.5z" fill="#1d0a2e"/><path d="M5.600 3.800l3.400-.6 5.400 1v5.400l-8.800.6z" fill="#a94fdc"/><path d="M7 5l3.400-.4v4L7 9.200z" fill="#5a1f86"/><path d="M8.400 14c1.400-.8 2.800-.6 3.600.8v6l-1.800 1.800-1.800-1.400z" fill="#5e2494"/><path d="M9.600 16.200h1.600v3H9.600z" fill="#b164e4"/><path d="M14.400 4.200l.7-.2V24.800l-.7.800z" fill="#f3f0f6"/><path d="M15.100 3.600l4.300 4.400V24l-4.300.6z" fill="#220c34"/><path d="M15.100 3.600l4.300 4.400-2 .8-2.300-1z" fill="#b860e8"/><path d="M15.700 12l1.800 1v8l-1.800.6z" fill="#3a145a"/><path d="M0 .2L5.600 4.400V26.100L0 22.400z" fill="#fae5a2"/></svg>
<div class="t" style="left:452.80px;top:187.10px;font-size:8.5px;transform:scaleX(0.9118);color:#151515;">Santiago</div>
<div class="t" style="left:452.80px;top:197.90px;font-size:8.5px;transform:scaleX(0.9054);color:#777;">Dieser PC\Videos</div>
<div class="t" style="left:7.30px;top:561.60px;font-size:8.3px;transform:scaleX(0.9377);color:#24438c;">28 Elemente</div>
<svg style="left:874px;top:562px" width="9" height="8" viewBox="0 0 9 8"><g fill="#dadada"><rect x="0" y="0" width="1.800" height="1.500"/><rect x="0" y="2.200" width="1.800" height="1.500"/><rect x="0" y="4.400" width="1.800" height="1.500"/><rect x="0" y="6.600" width="1.800" height="1.500"/></g><g fill="#e6e6e6"><rect x="2.600" y=".3" width="2.800" height=".9"/><rect x="6.100" y=".3" width="2.800" height=".9"/><rect x="2.600" y="2.500" width="2.800" height=".9"/><rect x="6.100" y="2.500" width="2.800" height=".9"/><rect x="2.600" y="4.700" width="2.800" height=".9"/><rect x="6.100" y="4.700" width="2.800" height=".9"/><rect x="2.600" y="6.900" width="2.800" height=".9"/><rect x="6.100" y="6.900" width="2.800" height=".9"/></g></svg>
<svg style="left:888.6px;top:562.4px" width="9" height="7" viewBox="0 0 9 7"><rect x="0" y="0" width="8.800" height="6.400" fill="#eef2f6"/><rect x=".4" y=".4" width="8" height="5.600" fill="#3f8ce6"/><path d="M.4 2.600c2-1 3.600-1 5 0l3-.4v1.600H.4z" fill="#e8f0f8"/><path d="M.4 3c1.600-.6 3-.2 4 1l2 .6 2 .2V6H.4z" fill="#3c7a58"/><path d="M3 5c2-.4 3.600-.4 5.400 0v1H3z" fill="#4a86c4"/></svg>
<div class="a" style="left:0px;top:573.5px;width:900px;height:26.5px;background:#090a0f"></div>
<div class="a" style="left:30px;top:573.5px;width:227px;height:26.5px;background:#3a3a3a"></div>
<div class="t" style="left:37.50px;top:582.60px;font-size:10px;transform:scaleX(0.9439);color:#a8a8a8;">Web und Windows durchsuchen</div>
<svg style="left:9px;top:581.8px" width="11" height="11" viewBox="0 0 11 11"><path d="M0 1.400L4.300.8v4.300H0zM4.900.7L10.400 0v5.100H4.900zM0 5.700h4.300V10L0 9.400zM4.900 5.700h5.500v5.100L4.900 10.100z" fill="#fff"/></svg>
<svg style="left:265.7px;top:582px" width="15" height="10" viewBox="0 0 15 10"><rect x="3" y=".5" width="8.800" height="8.600" fill="none" stroke="#e8e8e8" stroke-width=".9"/><path d="M1.600 2H.4v5.600h1.200M13.200 2h1.200v5.600h-1.200" stroke="#e8e8e8" stroke-width=".8" fill="none"/></svg>
<svg style="left:299px;top:579.5px" width="14" height="15" viewBox="0 0 14 15"><path fill-rule="evenodd" d="M0 5.600C1 2.200 3.800 0 7.200 0C11 0 13.200 2.800 13.200 6.400V8.200H4.800C5 10.400 6.600 11.500 8.800 11.500C10.200 11.500 11.400 11.100 12.400 10.400V13.300C11.200 14 9.600 14.500 7.800 14.500C4 14.500 1.500 12 1.500 8.600C1.500 6.400 2.400 4.800 3.800 3.800C2.200 4 1 4.600 0 5.600ZM4.500 5.600H9.300C9.300 4.200 8.400 3.300 7 3.300C5.600 3.300 4.700 4.200 4.500 5.600Z" fill="#0c8af0"/></svg>
<div class="a" style="left:322.2px;top:573.5px;width:30.6px;height:26.5px;background:#37393c"></div>
<div class="a" style="left:322.2px;top:598.3px;width:30.6px;height:1.7px;background:#8cc6f6"></div>
<svg style="left:330px;top:581px" width="15" height="12" viewBox="0 0 15 12"><path d="M0 .5C0 .2.200 0 .5 0H5.400l.9 1.300H14V11.200H0z" fill="#f3c13c"/><path d="M0 1.400h14v9.800H0z" fill="#fbe28c"/><path d="M0 1.400h14v1.600H0z" fill="#f8d666"/><path d="M2.300 6h9.200v5.400H2.300z" fill="#1cb0f2"/><path d="M2.300 6h9.200v1.200H2.300z" fill="#3aa4ee"/><path d="M5 8h4v3.400H5z" fill="#fbe28c"/></svg>
<svg style="left:361px;top:578.6px" width="15" height="16" viewBox="0 0 15 16"><path d="M4.300 5V3.400C4.300 1.700 5.500.5 7.100.5s2.800 1.200 2.800 2.900v1.100" stroke="#fff" stroke-width="1" fill="none"/><path d="M.7 4.700L14.700 3.100V15.700L.3 13.700z" fill="#fff"/><path d="M2.900 7.100l2.600-.3v2.300H2.900zM6 6.700l3-.3v2.700H6zM2.900 9.600h2.600v2.300l-2.600-.3zM6 9.600h3v2.700L6 12z" fill="#0a0b10"/></svg>
<svg style="left:392px;top:578.8px" width="16" height="16" viewBox="0 0 16 16"><rect x="0" y="0" width="16" height="15.900" fill="#c20a0c"/><rect x=".5" y=".5" width="15" height="14.900" fill="none" stroke="#8e0606" stroke-width=".8" stroke-dasharray=".8 .8"/><text x="1.600" y="12.200" font-family="Liberation Sans" font-weight="bold" font-style="italic" font-size="14" fill="#fff" transform="translate(0 0) scale(.88 1)">F</text><text x="7.200" y="13.900" font-family="Liberation Sans" font-weight="bold" font-style="italic" font-size="13" fill="#fff" transform="scale(.9 1)">z</text></svg>
<svg style="left:422.8px;top:579px" width="17" height="16" viewBox="0 0 17 16"><path d="M4.800 10.800L10.400 4" stroke="#e6de10" stroke-width="1.500"/><rect x="7.500" y=".3" width="6.700" height="4.700" fill="#cfd0d2"/><rect x="8.400" y="1" width="4.900" height="3.200" fill="#1428e0"/><path d="M8 5.500h6.600l.9 1.500H7.200z" fill="#dcdcdc"/><rect x="1.500" y="8.200" width="6.700" height="4.500" fill="#cfd0d2"/><rect x="2.400" y="8.900" width="4.900" height="3" fill="#1428e0"/><path d="M.8 13.300h8.200l.9 1.700H0z" fill="#dcdcdc"/><circle cx="7.600" cy="7.400" r="1" fill="#f0e810"/></svg>
<svg style="left:455px;top:579px" width="14" height="16" viewBox="0 0 14 16"><path d="M3 9.600h8l3 4.900H0z" fill="#ff9808"/><path d="M.5 13.600h13l.5.900H0z" fill="#e87a00"/><path d="M6.400 0h1.200l3 10.400H3.400z" fill="#f07e06"/><path d="M5.500 3h3l.7 2.400H4.800zM4.200 7.500h5.600l.7 2.400h-7z" fill="#dcdce2"/></svg>
<svg style="left:485.6px;top:579px" width="16" height="16" viewBox="0 0 16 16"><defs><linearGradient id="ffo" x1="0" y1="0" x2="0" y2="1"><stop offset="0" stop-color="#f47a20"/><stop offset="1" stop-color="#e2441c"/></linearGradient><linearGradient id="ffb" x1="0" y1="0" x2="1" y2="1"><stop offset="0" stop-color="#3fa4e6"/><stop offset=".6" stop-color="#1c5cbc"/><stop offset="1" stop-color="#163f94"/></linearGradient></defs><circle cx="7.500" cy="7.500" r="7.400" fill="url(#ffo)"/><path d="M8.500 .2a7.400 7.400 0 0 1 6.400 7.300c0 2-.7 3.700-1.900 5 .5-2.600 0-5.200-1.400-7.400C10.800 3.600 9.700 1.800 8.500 .2z" fill="#f8cc28"/><circle cx="8.400" cy="5.700" r="4.900" fill="url(#ffb)"/><path d="M1 5.200c1.400-1 3-.8 4 .2-.3 1.700.6 3 2.500 3.400 1.900.4 3.500 1 5.100.200.8-.4 1-1 .9-2l1.300 1c0 3.800-3.200 6.900-7.300 6.900S.2 11.600.2 7.500c0-.8.300-1.600.8-2.300z" fill="url(#ffo)"/><path d="M1.600 3.600L4 2l0 1.300 1.700-.4-.7 1.500 1.200.5-1.800 1.100-.6 2L2 6.600z" fill="#f26c1e"/><path d="M6.600 8.200l2.600-.7 1 .9-1.800.9z" fill="#f8a028"/></svg>
<div class="a" style="left:480.8px;top:598.3px;width:25.2px;height:1.7px;background:#8cc6f6"></div>
<svg style="left:516.8px;top:578.9px" width="16" height="15" viewBox="0 0 16 15"><defs><radialGradient id="g516" cx=".5" cy=".5" r=".7"><stop offset="0" stop-color="#3c1a4c"/><stop offset="1" stop-color="#1a0e26"/></radialGradient></defs><rect x="0" y="0" width="15" height="14.600" fill="url(#g516)"/><rect x="-4.300" y="-4.300" width="8.600" height="8.600" transform="translate(7.300 7.500) rotate(28)" fill="none" stroke="#9c86a8" stroke-width=".6"/><circle cx="7.200" cy="7.700" r="2" fill="none" stroke="#e070ea" stroke-width="1.300"/></svg>
<svg style="left:548px;top:578.9px" width="16" height="15" viewBox="0 0 16 15"><defs><radialGradient id="g548" cx=".5" cy=".5" r=".7"><stop offset="0" stop-color="#30304c"/><stop offset="1" stop-color="#15162a"/></radialGradient></defs><rect x="0" y="0" width="15" height="14.600" fill="url(#g548)"/><rect x="-4.300" y="-4.300" width="8.600" height="8.600" transform="translate(7.300 7.500) rotate(28)" fill="none" stroke="#8088a4" stroke-width=".6"/><circle cx="7.200" cy="7.700" r="2" fill="none" stroke="#30aef0" stroke-width="1.300"/></svg>
<svg style="left:578.8px;top:578.8px" width="16" height="16" viewBox="0 0 16 16"><rect x="1.200" y="1.200" width="13" height="13.500" fill="#f0642a"/><path d="M8 8L14.200 1.200v13.500H8z" fill="#ea2a14"/><path d="M7.500 0l7.500 7.800-7.500 7.900L0 7.800z" fill="#ecb878"/><path d="M2.600 7.800c1.800-2 3.400-2.700 5-2.700s3.300.7 5 2.700c-1.700 1.800-3.300 2.600-5 2.600s-3.200-.8-5-2.600z" fill="#f8fafc"/><circle cx="7.600" cy="7.700" r="2.300" fill="#2a72e0"/><circle cx="7.700" cy="7.600" r="1.100" fill="#0c1c50"/></svg>
<svg style="left:609.8px;top:578.9px" width="16" height="15" viewBox="0 0 16 15"><defs><radialGradient id="g609" cx=".5" cy=".5" r=".7"><stop offset="0" stop-color="#3c1a4c"/><stop offset="1" stop-color="#1a0e26"/></radialGradient></defs><rect x="0" y="0" width="15" height="14.600" fill="url(#g609)"/><rect x="-4.300" y="-4.300" width="8.600" height="8.600" transform="translate(7.300 7.500) rotate(28)" fill="none" stroke="#9c86a8" stroke-width=".6"/><circle cx="7.200" cy="7.700" r="2" fill="none" stroke="#e070ea" stroke-width="1.300"/></svg>
<div class="a" style="left:605px;top:598.3px;width:25px;height:1.7px;background:#8cc6f6"></div>
<svg style="left:641px;top:578.9px" width="16" height="15" viewBox="0 0 16 15"><defs><radialGradient id="g641" cx=".5" cy=".5" r=".7"><stop offset="0" stop-color="#30304c"/><stop offset="1" stop-color="#15162a"/></radialGradient></defs><rect x="0" y="0" width="15" height="14.600" fill="url(#g641)"/><rect x="-4.300" y="-4.300" width="8.600" height="8.600" transform="translate(7.300 7.500) rotate(28)" fill="none" stroke="#8088a4" stroke-width=".6"/><circle cx="7.200" cy="7.700" r="2" fill="none" stroke="#30aef0" stroke-width="1.300"/></svg>
<div class="a" style="left:636px;top:598.3px;width:25px;height:1.7px;background:#8cc6f6"></div>
<svg style="left:673.6px;top:581px" width="13" height="12" viewBox="0 0 13 12"><g transform="translate(6.200 6)"><g fill="#fff"><rect x="-1.300" y="-6" width="2.600" height="3" transform="rotate(0)"/><rect x="-1.300" y="-6" width="2.600" height="3" transform="rotate(45)"/><rect x="-1.300" y="-6" width="2.600" height="3" transform="rotate(90)"/><rect x="-1.300" y="-6" width="2.600" height="3" transform="rotate(135)"/><rect x="-1.300" y="-6" width="2.600" height="3" transform="rotate(180)"/><rect x="-1.300" y="-6" width="2.600" height="3" transform="rotate(225)"/><rect x="-1.300" y="-6" width="2.600" height="3" transform="rotate(270)"/><rect x="-1.300" y="-6" width="2.600" height="3" transform="rotate(315)"/></g><circle r="3.700" fill="none" stroke="#fff" stroke-width="1.700"/></g></svg>
<div class="a" style="left:667px;top:598.3px;width:25px;height:1.7px;background:#8cc6f6"></div>
<svg style="left:703.2px;top:584.8px" width="10" height="6" viewBox="0 0 10 6"><path d="M.4 4.800L4.600.6l4.200 4.200" stroke="#f0f0f0" stroke-width=".9" fill="none"/></svg>
<svg style="left:723.1px;top:581.8px" width="12" height="11" viewBox="0 0 12 11"><rect x="0" y="0" width="11.200" height="10.600" fill="#e30613"/><path d="M2.400 7.400C2.600 4.800 4 3 5.800 3c1.400 0 2.200 1 2 2.600L7.600 7c0 .6.400.9 1.100.7" stroke="#fff" stroke-width="1" fill="none"/><path d="M2.600 7c1.400.4 3.400-.2 4.800-1.600" stroke="#fff" stroke-width=".9" fill="none"/></svg>
<svg style="left:744px;top:583px" width="12" height="8" viewBox="0 0 12 8"><rect x="3.400" y="1.600" width="7.600" height="5.400" rx=".6" fill="none" stroke="#f0f0f0" stroke-width=".9"/><rect x="11.200" y="3.200" width=".9" height="2.200" fill="#f0f0f0"/><rect x="4.300" y="2.500" width="2.800" height="3.600" fill="#e4e4e4"/><path d="M.6.400h2.200v1.400H4v1.200H2.800c0 1-.6 1.600-1.400 1.600V3H.2V1.800h.4z" fill="#f0f0f0"/></svg>
<svg style="left:767px;top:582.5px" width="10" height="10" viewBox="0 0 10 10"><g fill="none" stroke="#e8e8e8" stroke-width="1"><path d="M1.200 9.400A8 8 0 0 1 9.200 1.400" opacity=".95"/><path d="M3.400 9.400A5.800 5.800 0 0 1 9.200 3.600"/><path d="M5.600 9.400A3.600 3.600 0 0 1 9.200 5.800"/></g><circle cx="8.400" cy="8.600" r="1.100" fill="#e8e8e8"/></svg>
<svg style="left:786px;top:582.5px" width="12" height="9" viewBox="0 0 12 9"><path d="M.4 3h2L5 .6v7.800L2.400 6h-2z" fill="none" stroke="#f0f0f0" stroke-width=".8"/><path d="M6.600 2.800c.8.900.8 2.500 0 3.400M8 1.600c1.500 1.600 1.500 4.200 0 5.800M9.500.5c2 2.200 2 5.800 0 8" stroke="#f0f0f0" stroke-width=".8" fill="none"/></svg>
<svg style="left:807.8px;top:581.8px" width="12" height="11" viewBox="0 0 12 11"><path d="M.5.500h10v7H7L5.500 9.400 4 7.500H.5z" fill="none" stroke="#f0f0f0" stroke-width=".9"/><path d="M2.400 2.800h6.200M2.400 4.700h6.200" stroke="#f0f0f0" stroke-width=".7"/></svg>
<svg style="left:829.3px;top:582.4px" width="16" height="9" viewBox="0 0 16 9"><rect x=".5" y=".5" width="15" height="7.800" rx=".8" fill="none" stroke="#f0f0f0" stroke-width=".9"/><path d="M2.400 2.800h11.200M2.400 4.400h11.200" stroke="#f0f0f0" stroke-width=".8" stroke-dasharray="1.100 .7"/><path d="M4.200 6.300h7.600" stroke="#f0f0f0" stroke-width=".8"/></svg>
<div class="t" style="left:866.20px;top:575.80px;font-size:8.3px;transform:scaleX(0.8616);color:#fff;">12:33</div>
<div class="t" style="left:856.20px;top:586.90px;font-size:8.3px;transform:scaleX(0.9147);color:#fff;">24.02.2016</div>
</div></body></html>
